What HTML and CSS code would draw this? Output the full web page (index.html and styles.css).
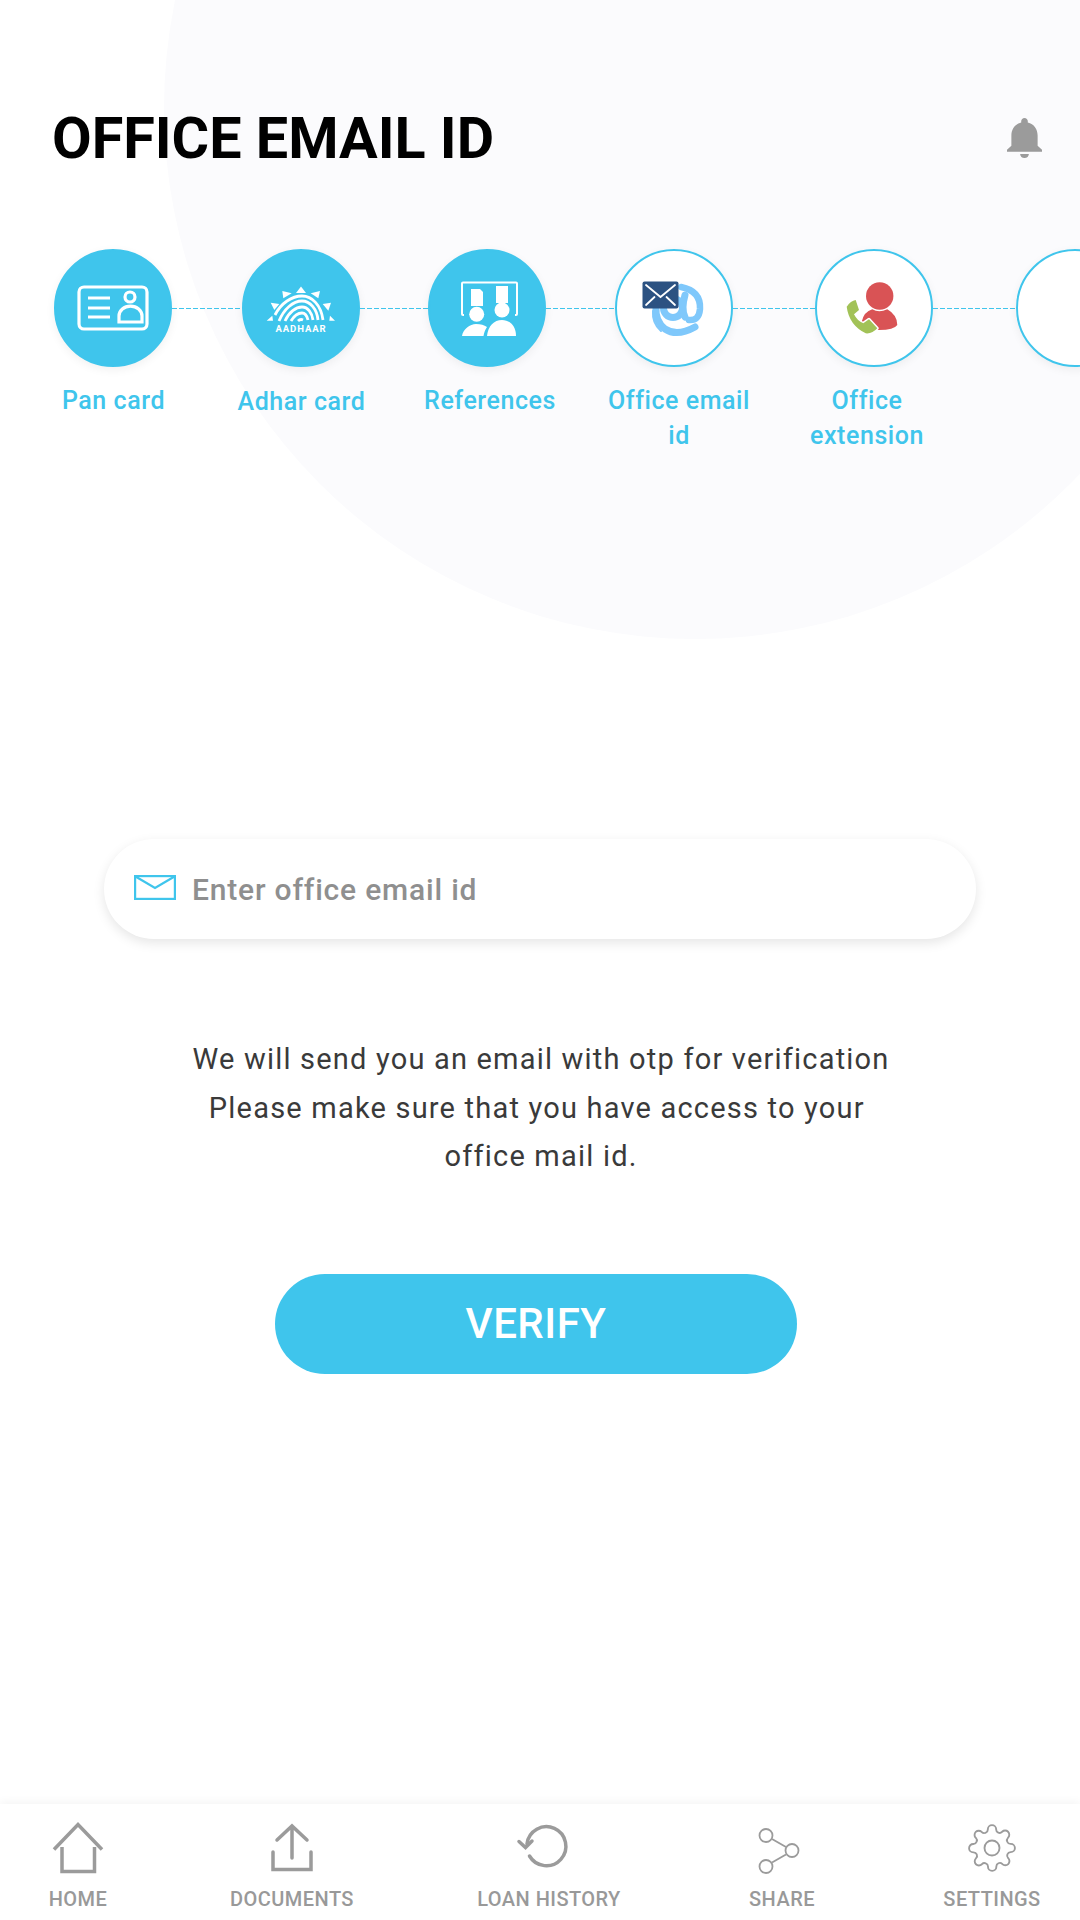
FILE: index.html
```html
<!doctype html>
<html>
<head>
<meta charset="utf-8">
<title>Office email id</title>
<link rel="stylesheet" href="styles.css">
</head>
<body>
<div class="page">
	<div class="bgcircle"></div>

	<div class="header">
		<h1 class="title">OFFICE EMAIL ID</h1>
		<svg class="bell" viewBox="4 2.5 16 19.5" preserveAspectRatio="none"><path d="M12 22c1.1 0 2-.9 2-2h-4c0 1.1.89 2 2 2zm6-6v-5c0-3.07-1.64-5.64-4.5-6.32V4c0-.83-.67-1.5-1.5-1.5s-1.5.67-1.5 1.5v.68C7.63 5.36 6 7.92 6 11v5l-2 2v1h16v-1l-2-2z"/></svg>
	</div>

	<div class="steps">
		<div class="circle done">
			<svg viewBox="0 0 118 118" fill="none" stroke="#fff" stroke-width="3.200">
				<rect x="25" y="38" width="68" height="42" rx="5"/>
				<path d="M34 49h22M34 59h22M34 68h22"/>
				<circle cx="76" cy="48" r="5"/>
				<path d="M65 73v-6a11 9.500 0 0 1 23 0v6z"/>
			</svg>
		</div>
		<div class="line l1"></div>
		<div class="circle done">
			<svg viewBox="0 0 118 118" fill="none" stroke="#fff" stroke-width="2.800">
				<g fill="#fff" stroke="none">
					<polygon points="59,37.500 64,44 54,44"/>
					<polygon points="40.300,42 49.700,44.300 41.300,49.300"/>
					<polygon points="78,42 68.700,44.300 76.300,49.300"/>
					<polygon points="28.700,53.700 37.300,55 32.300,61"/>
					<polygon points="89,53.700 80.700,55 86.300,61.700"/>
					<polygon points="24.700,71.700 31,71.700 30.300,66.700"/>
					<polygon points="93,71.700 87.300,71.700 88,66.700"/>
				</g>
				<path d="M33 66C39 54 50 47 60 47C70 47 79 56 81 71"/>
				<path d="M37 72C42 60 51 52 60 52C68 52 75 60 76 71"/>
				<path d="M43 72C47 63 54 58 60 58C66 58 70 64 71 71"/>
				<path d="M49 72C52 67 56 64 60 64C63 64 65 67 66 71"/>
				<path d="M56 72C57 71 59 70 61 71"/>
				<text class="aadhaar" x="59" y="82.500" text-anchor="middle" fill="#fff" stroke="none">AADHAAR</text>
			</svg>
		</div>
		<div class="line l2"></div>
		<div class="circle done">
			<svg viewBox="0 0 118 118" fill="none" stroke="#fff" stroke-width="2">
				<path d="M36 66h-1a1 1 0 0 1-1-1V34.500a1 1 0 0 1 1-1h53a1 1 0 0 1 1 1V65a1 1 0 0 1-1 1h-1"/>
				<g fill="#fff" stroke="none">
					<path d="M43 40h9l3 3v14H43z"/>
					<path d="M68 37h12v17H68z"/>
					<circle cx="48.700" cy="65.300" r="7.500"/>
					<circle cx="74" cy="61" r="7.500"/>
					<path d="M34 87c1-7 8-12 14-12 5 0 8 1 11 3-2 3-3 6-3.500 9z"/>
					<path d="M59 87c1-10 7-16 15-16s14 6 14 16z"/>
				</g>
			</svg>
		</div>
		<div class="line l3"></div>
		<div class="circle">
			<svg viewBox="0 0 118 118" fill="none">
				<g stroke="#7fc8fb" stroke-linecap="round">
					<path d="M80 78Q62 88 50 80Q40 72 41 58" stroke-width="7"/>
					<path d="M46 82Q37 74 38 62" stroke-width="2"/>
					<path d="M66 38Q86 42 85 60Q84 72 74 71" stroke-width="6.500"/>
					<circle cx="58" cy="59" r="9.500" stroke-width="7"/>
					<path d="M70 46Q66 60 70 68" stroke-width="7"/>
				</g>
				<rect x="27.500" y="32.500" width="36" height="27" rx="2" fill="#2c5282"/>
				<path d="M31 36l14.500 12L60 36M31 56l8.500-8M60 56l-8.500-8" stroke="#fff" stroke-width="1.800" stroke-linecap="round"/>
			</svg>
		</div>
		<div class="line l4"></div>
		<div class="circle">
			<svg viewBox="0 0 118 118" fill="none">
				<circle cx="64.700" cy="47" r="13.700" fill="#d95355"/>
				<path d="M46.700 72.700Q49 62.700 57.300 60.300Q64 64.300 72.300 60.300Q82.300 66 82.300 76Q79 81 64 81H50z" fill="#d95355"/>
				<path d="M31.700 57.700Q35.700 51.700 40.700 51L44 61L39 65.300Q42.300 72 48.300 74.300L54 70.300L62.300 79.300Q57.300 85 50.700 84.300Q34 76 31.700 57.700z" fill="#a2c257" stroke="#fff" stroke-width="3" stroke-linejoin="round" paint-order="stroke"/>
			</svg>
		</div>
		<div class="line l5"></div>
		<div class="circle"></div>
	</div>

	<div class="labels">
		<div class="label">Pan card</div>
		<div class="label low">Adhar card</div>
		<div class="label">References</div>
		<div class="label">Office email id</div>
		<div class="label">Office extension</div>
	</div>

	<div class="field">
		<svg class="mail" viewBox="0 0 42 25" fill="none" stroke="#3fc5ec" stroke-width="2.200"><rect x="1.100" y="1.100" width="39.800" height="22.800"/><path d="M1.500 1.500L21 13 40.500 1.500"/></svg>
		<span class="placeholder">Enter office email id</span>
	</div>

	<p class="info">We will send you an email with otp for verification<br>Please make sure that you have access to your&nbsp;<br>office mail id.</p>

	<div class="btn">VERIFY</div>

	<div class="nav">
		<div class="navitem">
			<svg class="ic" width="50" height="50" viewBox="0 0 50 50"><path d="M1 26.500L25 1.500 49 26.500M9 24v24.500h32.500V24"/></svg>
			<span>HOME</span>
		</div>
		<div class="navitem">
			<svg class="ic" width="42" height="50" viewBox="0 0 42 50"><path d="M21 3v32M6 17L21 3l15 14M2 29v17.500h38V29" stroke-linecap="round"/></svg>
			<span>DOCUMENTS</span>
		</div>
		<div class="navitem">
			<svg class="ic hist" width="52" height="50" viewBox="0 0 52 50"><path d="M10 21A19.500 19.500 0 1 1 12.500 33" stroke-linecap="round"/><path d="M2 18.500L8.500 24.500 15 18" stroke-linecap="round"/></svg>
			<span>LOAN HISTORY</span>
		</div>
		<div class="navitem">
			<svg class="ic thin" width="42" height="50" viewBox="0 0 42 50"><circle cx="8" cy="12.500" r="6.500"/><circle cx="34" cy="27.500" r="6.500"/><circle cx="8" cy="43.500" r="6.500"/><path d="M14 16l14 8M14 39.500l14-8"/></svg>
			<span>SHARE</span>
		</div>
		<div class="navitem">
			<svg class="ic gear" width="50" height="50" viewBox="0 0 24 24"><circle cx="12" cy="12" r="3.600"/><path d="M19.400 15a1.650 1.650 0 0 0 .33 1.820l.06.06a2 2 0 0 1 0 2.830 2 2 0 0 1-2.830 0l-.06-.06a1.650 1.650 0 0 0-1.820-.33 1.650 1.650 0 0 0-1 1.510V21a2 2 0 0 1-2 2 2 2 0 0 1-2-2v-.09A1.650 1.650 0 0 0 9 19.400a1.650 1.650 0 0 0-1.820.33l-.06.06a2 2 0 0 1-2.830 0 2 2 0 0 1 0-2.830l.06-.06a1.650 1.650 0 0 0 .33-1.820 1.650 1.650 0 0 0-1.510-1H3a2 2 0 0 1-2-2 2 2 0 0 1 2-2h.09A1.650 1.650 0 0 0 4.600 9a1.650 1.650 0 0 0-.33-1.820l-.06-.06a2 2 0 0 1 0-2.830 2 2 0 0 1 2.830 0l.06.06a1.650 1.650 0 0 0 1.820.33H9a1.650 1.650 0 0 0 1-1.510V3a2 2 0 0 1 2-2 2 2 0 0 1 2 2v.09a1.650 1.650 0 0 0 1 1.510 1.650 1.650 0 0 0 1.820-.33l.06-.06a2 2 0 0 1 2.830 0 2 2 0 0 1 0 2.830l-.06.06a1.650 1.650 0 0 0-.33 1.820V9a1.650 1.650 0 0 0 1.510 1H21a2 2 0 0 1 2 2 2 2 0 0 1-2 2h-.09a1.650 1.650 0 0 0-1.510 1z"/></svg>
			<span>SETTINGS</span>
		</div>
	</div>
</div>
</body>
</html>
```
FILE: styles.css
```css
*{
	box-sizing:border-box;
}
body{
	margin:0;
	background:#fff;
	font-family:Roboto,sans-serif;
}
.page{
	position:relative;
	width:1080px;
	height:1920px;
	overflow:hidden;
	display:flex;
	flex-direction:column;
}
.bgcircle{
	position:absolute;
	left:164px;
	top:-423px;
	width:1062px;
	height:1062px;
	border-radius:50%;
	background:#fbfbfd;
}
.header{
	position:relative;
	display:flex;
	justify-content:space-between;
	align-items:center;
	padding:82px 38px 0 52px;
	height:196px;
}
.title{
	margin:0;
	font-size:57.500px;
	line-height:64px;
	font-weight:700;
	color:#000;
}
.bell{
	width:35px;
	height:40px;
	margin-bottom:2px;
	fill:#9b9b9b;
}
.steps{
	position:relative;
	display:flex;
	align-items:center;
	margin-top:53px;
	padding-left:54px;
}
.circle{
	flex:none;
	width:118px;
	height:118px;
	border-radius:50%;
	border:2px solid #3fc5ec;
	background:#fff;
	box-shadow:0 3px 10px rgba(0,0,0,.06);
}
.circle svg{
	display:block;
	width:118px;
	height:118px;
	margin:-2px;
}
.done{
	background:#3fc5ec;
}
.aadhaar{
	font-family:Roboto,sans-serif;
	font-size:9.500px;
	font-weight:700;
	letter-spacing:.9px;
}
.line{
	flex:none;
	height:1px;
	background:repeating-linear-gradient(90deg,#3fc5ec 0,#3fc5ec 5px,transparent 5px,transparent 7px);
}
.l1{width:70px;}
.l2{width:68px;}
.l3{width:69px;}
.l4{width:82px;}
.l5{width:83px;}
.labels{
	position:relative;
	display:grid;
	grid-template-columns:189px 187px 190px 188px 188px;
	padding-left:19px;
	margin-top:16px;
}
.label{
	padding:0 20px;
	text-align:center;
	font-size:25px;
	font-weight:500;
	line-height:35px;
	letter-spacing:.55px;
	color:#3fc5ec;
}
.low{
	padding-top:1px;
}
.field{
	position:absolute;
	left:104px;
	top:839px;
	width:872px;
	height:100px;
	border-radius:50px;
	background:#fff;
	box-shadow:0 4px 12px rgba(0,0,0,.1);
	display:flex;
	align-items:center;
	padding-left:30px;
}
.mail{
	width:42px;
	height:25px;
	margin-right:16px;
	margin-bottom:3px;
}
.placeholder{
	font-size:30px;
	font-weight:500;
	letter-spacing:.8px;
	color:#8f8f8f;
}
.info{
	position:absolute;
	left:0;
	top:1035px;
	width:1082px;
	margin:0;
	text-align:center;
	font-size:29px;
	line-height:48.500px;
	letter-spacing:1.2px;
	color:#3a3a3a;
}
.btn{
	position:absolute;
	left:275px;
	top:1274px;
	width:522px;
	height:100px;
	border-radius:50px;
	background:#3fc5ec;
	color:#fff;
	text-align:center;
	font-size:42px;
	line-height:100px;
	font-weight:500;
	letter-spacing:.5px;
}
.nav{
	position:absolute;
	left:0;
	right:0;
	bottom:0;
	height:116px;
	background:#fff;
	box-shadow:0 -3px 8px rgba(0,0,0,.04);
	display:grid;
	grid-template-columns:96px 332px 182px 284px 136px;
	padding:19px 0 0 30px;
}
.navitem{
	display:flex;
	flex-direction:column;
	align-items:center;
	font-size:20px;
	font-weight:500;
	line-height:24px;
	letter-spacing:.45px;
	color:#999;
}
.navitem span{
	margin-top:14px;
}
.ic{
	display:block;
	overflow:visible;
	fill:none;
	stroke:#9b9b9b;
	stroke-width:3.500;
}
.hist{
	margin-right:12px;
}
.thin{
	margin-right:6px;
	stroke-width:1.800;
}
.gear{
	stroke-width:.9;
}
```
